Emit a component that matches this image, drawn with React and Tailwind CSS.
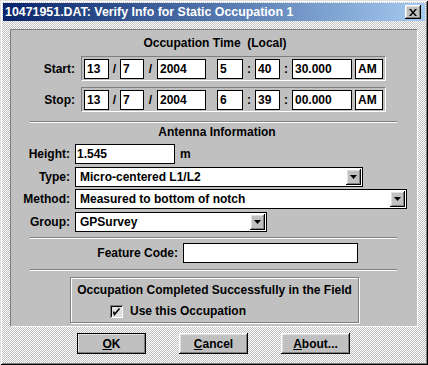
import React from 'react';

const raised =
  'shadow-[inset_-1px_-1px_0_#000,inset_1px_1px_0_#fff,inset_-2px_-2px_0_#808080,inset_2px_2px_0_#dfdfdf]';

const TimeBox = ({ w, children }) => (
  <div className={`${w} h-[20px] bg-white border border-black flex items-center pl-[2px] text-[12px] font-bold leading-none`}>
    {children}
  </div>
);

const Sep = ({ w, ch }) => (
  <div className={`${w} h-[20px] flex items-center justify-center text-[12px] font-bold`}>{ch}</div>
);

const TimeRow = ({ label, t }) => (
  <div className="flex items-center">
    <div className="w-[64px] text-right text-[12px] font-bold">{label}</div>
    <div className="ml-[6px] w-[305px] h-[25px] border border-t-[#808080] border-l-[#808080] border-r-white border-b-white flex items-start pt-[2px] pl-[2px]">
      <TimeBox w="w-[25px]">{t[0]}</TimeBox>
      <Sep w="w-[11px]" ch="/" />
      <TimeBox w="w-[24px]">{t[1]}</TimeBox>
      <Sep w="w-[13px]" ch="/" />
      <TimeBox w="w-[49px]">{t[2]}</TimeBox>
      <Sep w="w-[11px]" ch="" />
      <TimeBox w="w-[26px]">{t[3]}</TimeBox>
      <Sep w="w-[12px]" ch=":" />
      <TimeBox w="w-[25px]">{t[4]}</TimeBox>
      <Sep w="w-[12px]" ch=":" />
      <TimeBox w="w-[60px]">{t[5]}</TimeBox>
      <Sep w="w-[3px]" ch="" />
      <TimeBox w="w-[28px]">{t[6]}</TimeBox>
    </div>
  </div>
);

const Drop = ({ w, value }) => (
  <div className={`${w} h-[20px] bg-white border border-black flex items-center justify-between pl-[4px] pr-[1px]`}>
    <span className="text-[12px] font-bold">{value}</span>
    <div className={`w-[15px] h-[16px] bg-[#c0c0c0] ${raised} flex items-center justify-center`}>
      <svg width="7" height="4" viewBox="0 0 7 4">
        <path d="M0 0h7L3.5 4z" fill="#000" />
      </svg>
    </div>
  </div>
);

const Label = ({ children }) => (
  <div className="w-[59px] text-right text-[12px] font-bold">{children}</div>
);

const Line = () => (
  <div className="ml-[19px] w-[367px] h-[2px] border-t border-t-[#808080] border-b border-b-white" />
);

const Button = ({ def, first, rest }) => (
  <div
    className={`w-[69px] h-[21px] bg-[#c0c0c0] flex items-center justify-center text-[12px] font-bold ${raised} ${def ? 'outline outline-1 outline-black -outline-offset-1' : ''}`}
  >
    <span className="underline">{first}</span>
    {rest}
  </div>
);

export default function App() {
  return (
    <div className="w-[428px] h-[365px] flex flex-col bg-[image:repeating-conic-gradient(#c0c0c0_0_25%,#ffffff_0_50%)] bg-[length:2px_2px] shadow-[inset_1px_1px_0_#dfdfdf,inset_-1px_-1px_0_#000,inset_2px_2px_0_#fff,inset_-2px_-2px_0_#808080] font-['Liberation_Sans',Arial,sans-serif] text-black">
      {/* title bar */}
      <div className="mx-[3px] mt-[3px] h-[18px] bg-linear-to-r from-[#0a246a] to-[#a6caf0] flex items-center justify-between pl-[2px] pr-[4px]">
        <span className="text-white text-[12.4px] font-bold">10471951.DAT: Verify Info for Static Occupation 1</span>
        <div className={`w-[16px] h-[14px] bg-[#c0c0c0] ${raised} flex items-center justify-center`}>
          <svg width="8" height="7" viewBox="0 0 8 7">
            <path d="M0 0h2l2 2.5L6 0h2L5 3.5 8 7H6L4 4.5 2 7H0l3-3.5z" fill="#000" />
          </svg>
        </div>
      </div>

      {/* panel */}
      <div className="ml-[10px] mt-[8px] w-[408px] h-[298px] bg-[#c0c0c0] border border-t-[#808080] border-l-[#808080] border-r-white border-b-white flex flex-col">
        <div className="mt-[6px] h-[14px] leading-[14px] text-center text-[12px] font-bold pl-[2px]">Occupation Time&nbsp; (Local)</div>
        <div className="mt-[6px]">
          <TimeRow label="Start:" t={['13', '7', '2004', '5', '40', '30.000', 'AM']} />
        </div>
        <div className="mt-[6px]">
          <TimeRow label="Stop:" t={['13', '7', '2004', '6', '39', '00.000', 'AM']} />
        </div>
        <div className="mt-[9px]">
          <Line />
        </div>
        <div className="mt-[2px] h-[14px] leading-[14px] text-center text-[12px] font-bold pl-[6px]">Antenna Information</div>

        <div className="mt-[5px] flex items-center">
          <Label>Height:</Label>
          <div className="ml-[5px] w-[100px] h-[20px] bg-white border border-black flex items-center pl-[1px] text-[12px] font-bold">1.545</div>
          <span className="ml-[5px] text-[12px] font-bold">m</span>
        </div>
        <div className="mt-[3px] flex items-center">
          <Label>Type:</Label>
          <div className="ml-[5px]"><Drop w="w-[288px]" value="Micro-centered L1/L2" /></div>
        </div>
        <div className="mt-[2px] flex items-center">
          <Label>Method:</Label>
          <div className="ml-[5px]"><Drop w="w-[332px]" value="Measured to bottom of notch" /></div>
        </div>
        <div className="mt-[3px] flex items-center">
          <Label>Group:</Label>
          <div className="ml-[5px]"><Drop w="w-[192px]" value="GPSurvey" /></div>
        </div>

        <div className="mt-[5px]">
          <Line />
        </div>
        <div className="mt-[4px] flex items-center">
          <div className="w-[167px] text-right text-[12px] font-bold">Feature Code:</div>
          <div className="ml-[5px] w-[175px] h-[20px] bg-white border border-black" />
        </div>
        <div className="mt-[6px]">
          <Line />
        </div>

        <div className="mt-[6px] ml-[59px] w-[289px] h-[46px] border border-[#808080] shadow-[1px_1px_0_#fff,inset_1px_1px_0_#fff] flex flex-col">
          <div className="mt-[5px] h-[14px] leading-[14px] text-center text-[12px] font-bold">Occupation Completed Successfully in the Field</div>
          <div className="mt-[5px] ml-[39px] flex items-center">
            <div className="w-[13px] h-[13px] bg-[#e0e0e0] shadow-[inset_1px_1px_0_#808080,inset_-1px_-1px_0_#fff,inset_2px_2px_0_#000,inset_-2px_-2px_0_#dfdfdf] flex items-center justify-center">
              <svg width="13" height="13" viewBox="0 0 13 13">
                <path d="M3.5 6.5 L4.5 9.5 L9.5 3.5" stroke="#000" strokeWidth="1.6" fill="none" />
              </svg>
            </div>
            <span className="ml-[7px] text-[12px] font-bold">Use this Occupation</span>
          </div>
        </div>
      </div>

      {/* buttons */}
      <div className="mt-[6px] ml-[77px] flex gap-[33px]">
        <Button def first="O" rest="K" />
        <Button first="C" rest="ancel" />
        <Button first="A" rest="bout..." />
      </div>
    </div>
  );
}
